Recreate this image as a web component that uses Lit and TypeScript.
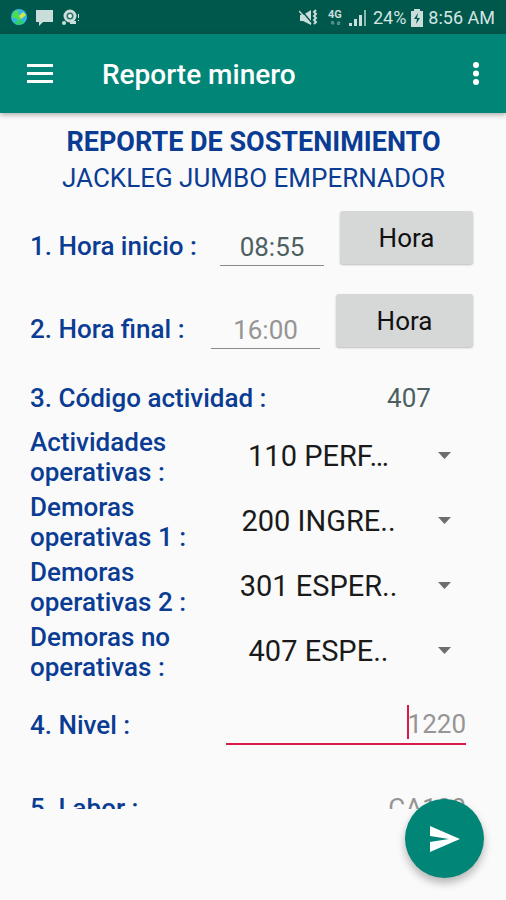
import { LitElement, html, css, svg } from "lit";
import { customElement, state } from "lit/decorators.js";

interface Activity {
  id: string;
  label: string;
  option: string;
}

const ACTIVITIES: Activity[] = [
  { id: "actividades", label: "Actividades operativas :", option: "110 PERF…" },
  { id: "demoras1", label: "Demoras operativas 1 :", option: "200 INGRE.." },
  { id: "demoras2", label: "Demoras operativas 2 :", option: "301 ESPER.." },
  { id: "demorasno", label: "Demoras no operativas :", option: "407 ESPE.." },
];

@customElement("status-bar")
export class StatusBar extends LitElement {
  static styles = css`
    :host {
      display: flex;
      align-items: center;
      justify-content: space-between;
      height: 34px;
      padding: 2px 11px 0 10px;
      box-sizing: border-box;
      background: #00574b;
      color: #d3e5e2;
      font-size: 18px;
      line-height: 24px;
    }
    .group {
      display: flex;
      align-items: center;
    }
    .left {
      gap: 8px;
    }
    .right {
      gap: 5px;
    }
    .net {
      margin-left: 4px;
    }
    svg {
      display: block;
    }
  `;

  render() {
    return html`
      <div class="group left">
        <svg width="18" height="18" viewBox="0 0 18 18" aria-hidden="true">
          <circle cx="9" cy="8" r="8" fill="#35b4e8" />
          <path d="M3 4Q5 1 8 1L9 6L12 8L9 12L6 9L2 9Z" fill="#4fdc4f" />
          <path d="M9 7L13 3L16 6L11 10Z" fill="#d2e64a" />
          <path d="M5 12L12 11L14 14Q9 17 5 15Z" fill="#2fd06a" />
        </svg>
        <svg width="18" height="18" viewBox="0 0 18 18" fill="#c9dedb" aria-hidden="true">
          <path d="M0 1H17V13H7L3 17V13H0Z" />
        </svg>
        <svg width="18" height="18" viewBox="0 0 18 18" aria-hidden="true">
          <circle cx="8" cy="7" r="5" fill="#2d7268" stroke="#c9dedb" stroke-width="3" />
          <circle cx="8" cy="7" r="2" fill="#e4f0ee" />
          <circle cx="2" cy="14" r="2" fill="#c9dedb" />
          <path d="M8 12H14V15H8Z M16 5H17V9H16Z M16 11H17V12H16Z" fill="#c9dedb" />
        </svg>
      </div>
      <div class="group right">
        <svg width="20" height="18" viewBox="0 0 20 18" aria-hidden="true">
          <path d="M1 6H4L12 1V16L4 12H1Z" fill="#c9dedb" />
          <path d="M2 1L13 14" stroke="#00574b" stroke-width="1.5" />
          <path d="M0 2L12 15" stroke="#c9dedb" stroke-width="1.5" />
          <path
            d="M17 1L15 3L17 5L15 7L17 9L15 11L17 13L15 15"
            fill="none"
            stroke="#c9dedb"
            stroke-width="2"
          />
        </svg>
        <svg class="net" width="16" height="20" viewBox="0 0 16 20" aria-hidden="true">
          <text x="0" y="10" font-size="11" font-weight="700" fill="#c9dedb">4G</text>
          <path d="M3 13H6V15H7L5 17L2 15H3ZM9 17H12V15H13L11 13L8 15H9Z" fill="#4f8f86" />
        </svg>
        <svg width="19" height="18" viewBox="0 0 19 18" aria-hidden="true">
          <path d="M0 14H3V17H0ZM5 10H8V17H5ZM10 6H13V17H10Z" fill="#c9dedb" />
          <path d="M15 1H17V17H15Z" fill="#8db8b1" />
        </svg>
        <span>24%</span>
        <svg width="12" height="18" viewBox="0 0 12 18" aria-hidden="true">
          <path d="M3 0H9V2H12V18H0V2H3Z" fill="#c9dedb" />
          <path d="M7 4L3 10H6L5 15L9 9H6Z" fill="#00574b" />
        </svg>
        <span>8:56 AM</span>
      </div>
    `;
  }
}

@customElement("app-root")
export class AppRoot extends LitElement {
  static styles = css`
    :host {
      display: flex;
      flex-direction: column;
      height: 100vh;
      position: relative;
      overflow: hidden;
      background: #fafafa;
      color: #0b3c94;
      font-family: Roboto, "Noto Sans", sans-serif;
      font-size: 26px;
      line-height: 30px;
    }
    button,
    input,
    select {
      font: inherit;
      border: 0;
      border-radius: 0;
      margin: 0;
      padding: 0;
      background: none;
      outline: none;
      min-width: 0;
      box-sizing: border-box;
    }
    svg {
      display: block;
    }
    .appbar {
      display: flex;
      align-items: center;
      height: 79px;
      flex: none;
      padding: 0 16px 0 25px;
      box-sizing: border-box;
      background: #018577;
      color: #fff;
      box-shadow: 0 2px 5px rgba(0, 0, 0, 0.3);
      z-index: 1;
    }
    .appbar h1 {
      flex: 1;
      margin: 2px 0 0 47px;
      font-size: 28px;
      line-height: 34px;
      font-weight: 500;
    }
    .form {
      flex: 1;
      min-height: 0;
      overflow: hidden;
      margin-bottom: 91px;
      padding: 11px 33px 0 30px;
    }
    .heading {
      margin: 0 0 15px;
      padding-left: 4px;
      text-align: center;
      line-height: 36px;
      font-weight: 400;
      font-size: 26px;
    }
    .heading strong {
      display: block;
      font-size: 27px;
      font-weight: 700;
    }
    .heading span {
      display: block;
    }
    .row {
      display: flex;
      align-items: flex-start;
    }
    .time {
      gap: 16px;
      height: 83px;
    }
    .label {
      flex: 1;
      font-weight: 500;
    }
    .time .label {
      padding-top: 20px;
    }
    .time input {
      width: 104px;
      height: 38px;
      margin-top: 17px;
      text-align: center;
      color: #4c6062;
      border-bottom: 1px solid #8c8c8c;
    }
    .time .wide {
      width: 109px;
    }
    input::placeholder {
      color: #959595;
      opacity: 1;
    }
    .hour {
      width: 133px;
      height: 53px;
      background: #d6d8d7;
      color: #111;
      border-radius: 3px;
      box-shadow: 0 1px 2px rgba(0, 0, 0, 0.25);
    }
    .time .wide + .hour {
      width: 137px;
    }
    .code {
      height: 50px;
      padding-top: 6px;
      box-sizing: border-box;
    }
    .code output {
      width: 128px;
      text-align: center;
      color: #4c6062;
    }
    .pick {
      height: 65px;
      justify-content: space-between;
    }
    .pick .label {
      flex: 0 0 164px;
    }
    .picker {
      display: flex;
      align-items: center;
      height: 58px;
      width: 236px;
      margin-right: 22px;
    }
    .picker select {
      appearance: none;
      flex: 1;
      height: 36px;
      font-size: 29px;
      line-height: 36px;
      color: #1a1a1a;
      text-align: center;
      text-align-last: center;
    }
    .picker svg {
      flex: none;
      margin-left: 16px;
      pointer-events: none;
    }
    .entry {
      height: 83px;
      padding-right: 7px;
    }
    .entry .label {
      padding-top: 23px;
    }
    .field {
      display: flex;
      align-items: flex-end;
      justify-content: flex-end;
      width: 240px;
      height: 58px;
      box-sizing: border-box;
      border-bottom: 1px solid #8c8c8c;
    }
    .field.active {
      border-bottom: 2px solid #d81b4a;
    }
    .field input {
      width: 100%;
      height: 38px;
      text-align: right;
      color: #4c6062;
    }
    .field.active input {
      width: 59px;
    }
    .caret {
      width: 2px;
      height: 34px;
      margin-bottom: 4px;
      margin-right: -2px;
      background: #d81b4a;
    }
    .fab {
      position: absolute;
      right: 22px;
      bottom: 22px;
      width: 79px;
      height: 79px;
      display: flex;
      align-items: center;
      justify-content: center;
      border-radius: 50%;
      background: #018577;
      box-shadow: 0 5px 9px rgba(0, 0, 0, 0.28);
    }
  `;

  @state() private start = "08:55";

  private row(a: Activity) {
    return html`
      <div class="row pick">
        <label class="label" for=${a.id}>${a.label}</label>
        <div class="picker">
          <select id=${a.id}>
            <option>${a.option}</option>
          </select>
          <svg width="13" height="9" viewBox="0 0 13 9" aria-hidden="true">
            ${svg`<path d="M0 0H13L6.5 7Z" fill="#6e6e6e" />`}
          </svg>
        </div>
      </div>
    `;
  }

  render() {
    return html`
      <status-bar></status-bar>
      <header class="appbar">
        <button aria-label="Menú">
          <svg width="30" height="22" viewBox="0 0 30 22" fill="#fff" aria-hidden="true">
            <path d="M2 1H28V4H2ZM2 9H28V12H2ZM2 17H28V20H2Z" />
          </svg>
        </button>
        <h1>Reporte minero</h1>
        <button aria-label="Más opciones">
          <svg width="28" height="24" viewBox="0 0 28 24" fill="#fff" aria-hidden="true">
            <circle cx="14" cy="3" r="3" />
            <circle cx="14" cy="11.5" r="3" />
            <circle cx="14" cy="20" r="3" />
          </svg>
        </button>
      </header>
      <main class="form">
        <h2 class="heading">
          <strong>REPORTE DE SOSTENIMIENTO</strong>
          <span>JACKLEG JUMBO EMPERNADOR</span>
        </h2>
        <div class="row time">
          <label class="label" for="inicio">1. Hora inicio :</label>
          <input id="inicio" type="text" .value=${this.start} />
          <button class="hour">Hora</button>
        </div>
        <div class="row time">
          <label class="label" for="final">2. Hora final :</label>
          <input id="final" class="wide" type="text" placeholder="16:00" />
          <button class="hour">Hora</button>
        </div>
        <div class="row code">
          <label class="label" for="codigo">3. Código actividad :</label>
          <output id="codigo">407</output>
        </div>
        ${ACTIVITIES.map((a) => this.row(a))}
        <div class="row entry">
          <label class="label" for="nivel">4. Nivel :</label>
          <div class="field active">
            <span class="caret"></span>
            <input id="nivel" type="text" placeholder="1220" />
          </div>
        </div>
        <div class="row entry">
          <label class="label" for="labor">5. Labor :</label>
          <div class="field">
            <input id="labor" type="text" placeholder="CA100" />
          </div>
        </div>
      </main>
      <button class="fab" aria-label="Enviar">
        <svg width="30" height="26" viewBox="0 0 30 26" aria-hidden="true">
          <path d="M0 0L30 13L0 26V16L19 13L0 10Z" fill="#fff" />
        </svg>
      </button>
    `;
  }
}
